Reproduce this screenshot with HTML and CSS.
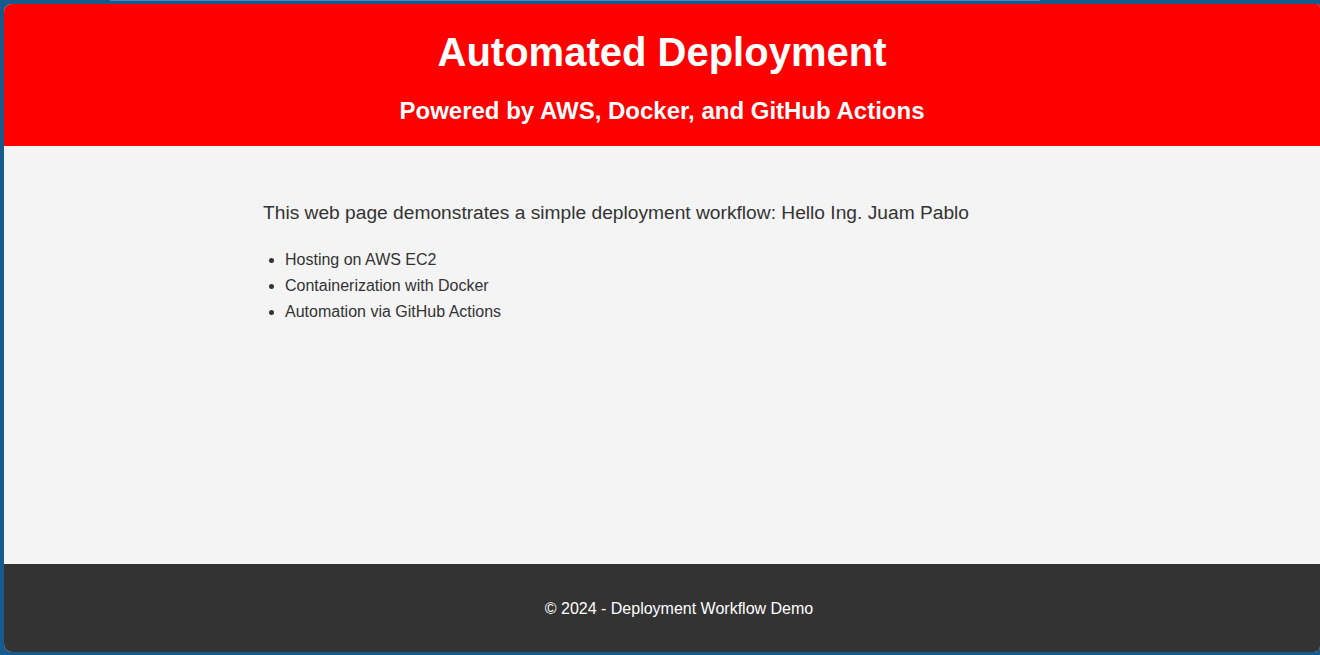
FILE: index.html
```html
<!DOCTYPE html>
<html lang="en">
<head>
<meta charset="UTF-8">
<title>Automated Deployment</title>
<link rel="stylesheet" href="styles.css">
</head>
<body>
<div class="frame-top"><div class="frame-line"></div></div>
<div class="window">
  <header class="site-header">
    <h1 class="title">Automated Deployment</h1>
    <h2 class="subtitle">Powered by AWS, Docker, and GitHub Actions</h2>
  </header>
  <main class="content">
    <div class="container">
      <p class="intro">This web page demonstrates a simple deployment workflow: Hello Ing. Juam Pablo</p>
      <ul class="features">
        <li>Hosting on AWS EC2</li>
        <li>Containerization with Docker</li>
        <li>Automation via GitHub Actions</li>
      </ul>
    </div>
  </main>
  <footer class="site-footer">
    <p class="copy">&copy; 2024 - Deployment Workflow Demo</p>
  </footer>
</div>
</body>
</html>
```
FILE: styles.css
```css
html, body {
  margin: 0;
  height: 100%;
}
body {
  background: #165a8e;
  font-family: "Liberation Sans", Arial, sans-serif;
  display: flex;
  flex-direction: column;
  padding: 0 0 3px 4px;
  box-sizing: border-box;
}
.frame-top {
  height: 4px;
  flex: none;
}
.frame-line {
  margin-left: 106px;
  width: 930px;
  height: 1px;
  background: #4f86ba;
}
.window {
  flex: 1;
  display: flex;
  flex-direction: column;
  border-radius: 8px 4px 6px 8px;
  overflow: hidden;
  background: #f4f4f4;
}
.site-header {
  background: #ff0000;
  color: #fff;
  text-align: center;
  padding: 26px 0 21px;
}
.title {
  margin: 0;
  font-size: 40px;
  font-weight: bold;
  line-height: normal;
}
.subtitle {
  margin: 22px 0 0;
  font-size: 24px;
  font-weight: bold;
  line-height: normal;
}
.content {
  flex: 1;
  color: #333;
}
.container {
  max-width: 800px;
  margin: 0 auto;
  padding: 34px 0 0;
}
.intro {
  margin: 18px 0 18px 1px;
  font-size: 19.2px;
  line-height: 1.6;
}
.features {
  margin: 0;
  padding-left: 23px;
  font-size: 16px;
  line-height: 26px;
}
.site-footer {
  background: #333;
  color: #fff;
  height: 88px;
  box-sizing: border-box;
  padding: 2px 0 0 34px;
  display: flex;
  align-items: center;
  justify-content: center;
}
.copy {
  margin: 0;
  font-size: 16px;
}
```
